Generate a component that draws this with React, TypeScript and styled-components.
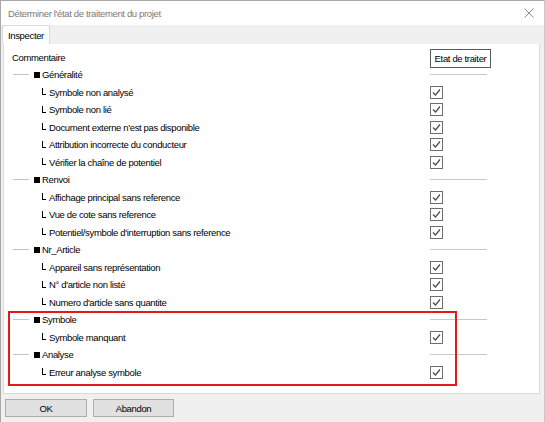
import * as React from 'react';
import styled, { createGlobalStyle } from 'styled-components';

const GlobalStyle = createGlobalStyle`
  html, body {
    margin: 0;
    padding: 0;
    background: #f0f0f0;
  }
  body {
    font-family: 'Liberation Sans', Arial, sans-serif;
    font-size: 9.5px;
    letter-spacing: -0.35px;
    color: #000;
  }
`;

const Window = styled.div`
  position: relative;
  width: 545px;
  height: 422px;
  box-sizing: border-box;
  border-left: 1px solid #a8a8a8;
  border-top: 1px solid #a8a8a8;
  border-right: 1px solid #c8c8c8;
  background: #f0f0f0;
  display: flex;
  flex-direction: column;
  overflow: hidden;
`;

const TitleBar = styled.div`
  height: 24px;
  background: #fff;
  display: flex;
  align-items: center;
  justify-content: space-between;
  padding: 0 10px 0 7px;
`;

const TitleText = styled.span`
  color: #7a7a7a;
`;

const CloseIcon = styled.svg`
  width: 10px;
  height: 10px;
`;

const TabStrip = styled.div`
  height: 19px;
  display: flex;
  align-items: flex-end;
  padding-left: 1px;
`;

const Tab = styled.div`
  height: 18px;
  padding: 0 5px;
  background: #fff;
  border: 1px solid #d9d9d9;
  border-bottom: none;
  display: flex;
  align-items: center;
`;

const Panel = styled.div`
  position: relative;
  height: 350px;
  margin: 0 4px 0 2px;
  background: #fff;
  border: 1px solid #dadada;
  border-top: none;
  box-sizing: border-box;
  display: flex;
  flex-direction: column;
`;

const HeaderRow = styled.div`
  height: 22px;
  display: grid;
  grid-template-columns: 1fr 109px;
  align-items: start;
`;

const HeaderLabel = styled.span`
  padding: 8px 0 0 8px;
`;

const HeaderBox = styled.span`
  margin-top: 5px;
  height: 19px;
  width: 61px;
  box-sizing: border-box;
  border: 1px solid #5a5a5a;
  display: flex;
  align-items: center;
  justify-content: center;
  white-space: nowrap;
`;

const Row = styled.div`
  height: 17.5px;
  display: grid;
  grid-template-columns: 1fr 109px;
  align-items: center;
`;

const GroupLabel = styled.div`
  display: flex;
  align-items: center;
`;

const Dash = styled.span`
  width: 16px;
  height: 1px;
  background: #c4c4c4;
  margin: 0 5px 0 9px;
`;

const Square = styled.span`
  width: 6px;
  height: 6px;
  background: #000;
  margin-right: 2px;
`;

const ChildLabel = styled.div`
  display: flex;
  align-items: center;
  padding-left: 38px;
`;

const Corner = styled.span`
  width: 3px;
  height: 6px;
  border-left: 1px solid #000;
  border-bottom: 1px solid #000;
  margin: 0 3px 1px 0;
`;

const ColLine = styled.span`
  width: 57px;
  height: 1px;
  background: #c8c8c8;
`;

const Check = styled.svg`
  width: 13px;
  height: 13px;
`;

const Highlight = styled.div`
  position: absolute;
  left: 4px;
  top: 267px;
  width: 449px;
  height: 75px;
  box-sizing: border-box;
  border: 2px solid #e41a1a;
  pointer-events: none;
`;

const Footer = styled.div`
  flex: 1;
  display: flex;
  align-items: center;
  gap: 6px;
  padding: 0 0 0 4px;
`;

const Button = styled.button<{ $width: number }>`
  width: ${(p) => p.$width}px;
  height: 18px;
  padding: 0;
  font: inherit;
  letter-spacing: inherit;
  color: #000;
  background: #e1e1e1;
  border: 1px solid #adadad;
`;

type Item =
  | { kind: 'group'; label: string }
  | { kind: 'child'; label: string };

const items: Item[] = [
  { kind: 'group', label: 'Généralité' },
  { kind: 'child', label: 'Symbole non analysé' },
  { kind: 'child', label: 'Symbole non lié' },
  { kind: 'child', label: "Document externe n'est pas disponible" },
  { kind: 'child', label: 'Attribution incorrecte du conducteur' },
  { kind: 'child', label: 'Vérifier la chaîne de potentiel' },
  { kind: 'group', label: 'Renvoi' },
  { kind: 'child', label: 'Affichage principal sans reference' },
  { kind: 'child', label: 'Vue de cote sans reference' },
  { kind: 'child', label: "Potentiel/symbole d'interruption sans reference" },
  { kind: 'group', label: 'Nr_Article' },
  { kind: 'child', label: 'Appareil sans représentation' },
  { kind: 'child', label: "N° d'article non listé" },
  { kind: 'child', label: "Numero d'article sans quantite" },
  { kind: 'group', label: 'Symbole' },
  { kind: 'child', label: 'Symbole manquant' },
  { kind: 'group', label: 'Analyse' },
  { kind: 'child', label: 'Erreur analyse symbole' },
];

function CheckBox() {
  return (
    <Check viewBox="0 0 13 13">
      <rect x="0.5" y="0.5" width="12" height="12" fill="#fff" stroke="#6e6e6e" />
      <polyline points="3,6.5 5.5,9 10,3.5" fill="none" stroke="#4a4a4a" strokeWidth="1.2" />
    </Check>
  );
}

export default function App() {
  return (
    <>
      <GlobalStyle />
      <Window>
        <TitleBar>
          <TitleText>Déterminer l'état de traitement du projet</TitleText>
          <CloseIcon viewBox="0 0 10 10">
            <path d="M0.5 0.5 L9.5 9.5 M9.5 0.5 L0.5 9.5" stroke="#8a8a8a" strokeWidth="1" />
          </CloseIcon>
        </TitleBar>
        <TabStrip>
          <Tab>Inspecter</Tab>
        </TabStrip>
        <Panel>
          <HeaderRow>
            <HeaderLabel>Commentaire</HeaderLabel>
            <HeaderBox>Etat de traiter</HeaderBox>
          </HeaderRow>
          {items.map((it, i) =>
            it.kind === 'group' ? (
              <Row key={i}>
                <GroupLabel>
                  <Dash />
                  <Square />
                  {it.label}
                </GroupLabel>
                <ColLine />
              </Row>
            ) : (
              <Row key={i}>
                <ChildLabel>
                  <Corner />
                  {it.label}
                </ChildLabel>
                <CheckBox />
              </Row>
            )
          )}
          <Highlight />
        </Panel>
        <Footer>
          <Button $width={82}>OK</Button>
          <Button $width={81}>Abandon</Button>
        </Footer>
      </Window>
    </>
  );
}
